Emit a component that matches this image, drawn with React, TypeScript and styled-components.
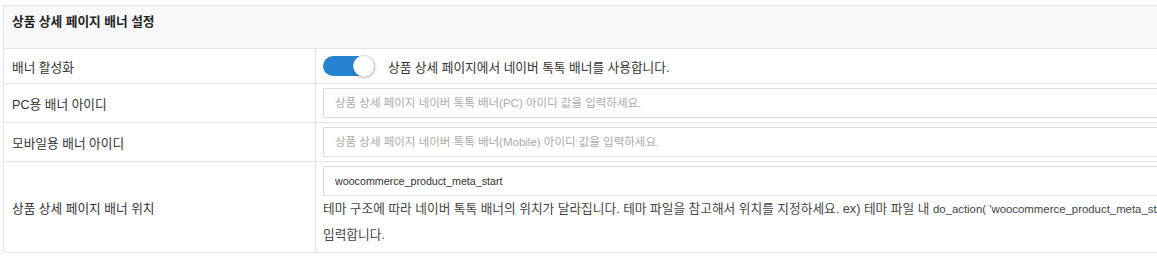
import React from "react";
import styled, { createGlobalStyle } from "styled-components";

const GlobalStyle = createGlobalStyle`
  html, body {
    margin: 0;
    overflow: hidden;
    background: #fff;
  }
  body {
    font-family: "Liberation Sans", "Noto Sans CJK KR", sans-serif;
    font-size: 12.7px;
    color: #333;
  }
  * {
    box-sizing: border-box;
  }
`;

const Page = styled.div`
  padding: 5px 0 0 3px;
`;
const Panel = styled.section`
  width: 1600px;
  border: 1px solid #e5e5e5;
`;
const Heading = styled.h3`
  margin: 0;
  padding: 8px 8px 17px;
  line-height: 17px;
  font-size: 12.7px;
  font-weight: bold;
  color: #222;
  background: #f8f9fa;
  border-bottom: 1px solid #e5e5e5;
`;
const Row = styled.div`
  display: grid;
  grid-template-columns: 312px 1fr;
  border-bottom: 1px solid #e5e5e5;
  &:last-child {
    border-bottom: none;
  }
`;
const Label = styled.div`
  display: flex;
  align-items: center;
  padding: 0 8px;
  border-right: 1px solid #e5e5e5;
  color: #333;
`;
const Value = styled.div<{ $tight?: boolean }>`
  display: flex;
  flex-direction: column;
  justify-content: center;
  padding: ${(p) => (p.$tight ? "7px" : "4px")} 7px;
`;
const SwitchLine = styled.label`
  display: flex;
  align-items: center;
  gap: 13px;
  color: #333;
`;
const Track = styled.span<{ $on: boolean }>`
  position: relative;
  width: 52px;
  height: 20px;
  border-radius: 10px;
  background: ${(p) => (p.$on ? "#2683d2" : "#ccc")};
`;
const Knob = styled.span<{ $on: boolean }>`
  position: absolute;
  top: -1px;
  left: ${(p) => (p.$on ? "30px" : "0")};
  width: 22px;
  height: 22px;
  border-radius: 50%;
  background: #fff;
  border: 1px solid #e2e2e2;
  box-shadow: 0 1px 3px rgba(0, 0, 0, 0.25);
`;
const TextInput = styled.input`
  width: 100%;
  height: 30px;
  padding: 0 11px;
  border: 1px solid #ddd;
  border-radius: 0;
  outline: none;
  font-family: "Liberation Sans", "Noto Sans CJK KR", sans-serif;
  font-size: 10.7px;
  color: #333;
  background: #fff;
  &::placeholder {
    color: #aaa;
    font-size: 11.5px;
  }
`;
const Help = styled.p`
  margin: 0;
  line-height: 26px;
  color: #444;
  white-space: nowrap;
`;
const Code = styled.span`
  font-size: 11.4px;
`;

const App = () => {
  const enabled = true;

  return (
    <>
      <GlobalStyle />
      <Page>
        <Panel>
          <Heading>상품 상세 페이지 배너 설정</Heading>
          <Row>
            <Label>배너 활성화</Label>
            <Value $tight>
              <SwitchLine>
                <Track $on={enabled}>
                  <Knob $on={enabled} />
                </Track>
                상품 상세 페이지에서 네이버 톡톡 배너를 사용합니다.
              </SwitchLine>
            </Value>
          </Row>
          <Row>
            <Label>PC용 배너 아이디</Label>
            <Value>
              <TextInput placeholder="상품 상세 페이지 네이버 톡톡 배너(PC) 아이디 값을 입력하세요." />
            </Value>
          </Row>
          <Row>
            <Label>모바일용 배너 아이디</Label>
            <Value>
              <TextInput placeholder="상품 상세 페이지 네이버 톡톡 배너(Mobile) 아이디 값을 입력하세요." />
            </Value>
          </Row>
          <Row>
            <Label>상품 상세 페이지 배너 위치</Label>
            <Value>
              <TextInput defaultValue="woocommerce_product_meta_start" />
              <Help>
                테마 구조에 따라 네이버 톡톡 배너의 위치가 달라집니다. 테마 파일을
                참고해서 위치를 지정하세요. ex) 테마 파일 내{" "}
                <Code>do_action( 'woocommerce_product_meta_start' )</Code> 부분의
                액션 이름을
                <br />
                입력합니다.
              </Help>
            </Value>
          </Row>
        </Panel>
      </Page>
    </>
  );
};

export default App;
